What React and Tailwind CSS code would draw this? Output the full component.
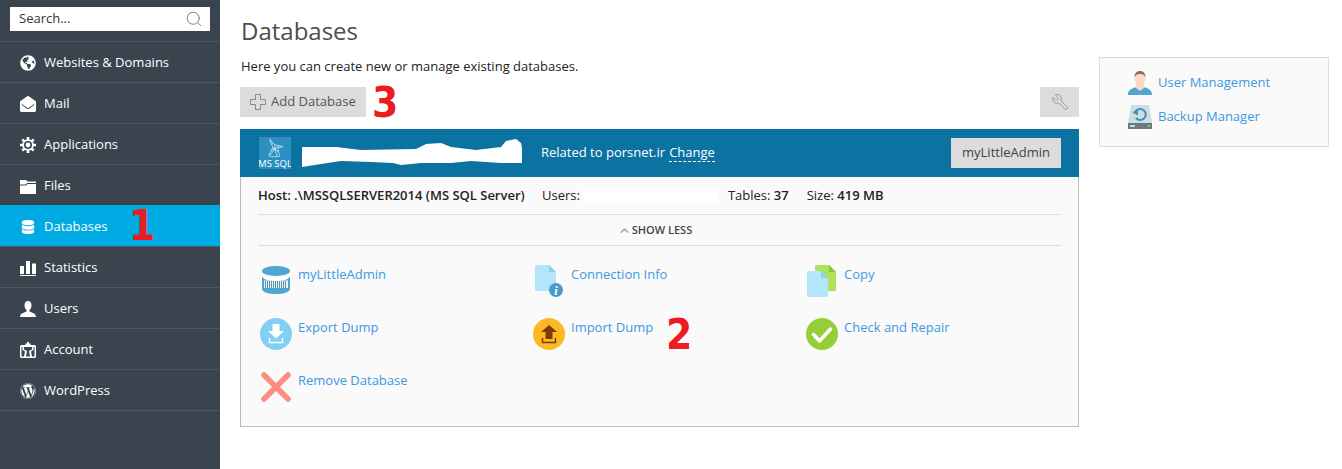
import { FaGlobeAmericas, FaEnvelopeOpen, FaDatabase, FaWordpress } from "react-icons/fa";
import { Search, Wrench, ChevronUp } from "lucide-react";

function GearIcon() {
  return (
    <svg width="16" height="16" viewBox="0 0 16 16">
      <path d="M8 0v16M0 8h16M2.300 2.300l11.400 11.400M13.700 2.300L2.300 13.700" stroke="currentColor" strokeWidth="2.600" />
      <circle cx="8" cy="8" r="5.800" fill="currentColor" />
      <circle cx="8" cy="8" r="4" fill="#39444f" />
      <circle cx="8" cy="8" r="2.400" fill="currentColor" />
    </svg>
  );
}

function FolderIcon() {
  return (
    <svg width="16" height="16" viewBox="0 0 16 16" fill="currentColor">
      <path d="M0 2h6l1.500 1.500H16V5H7L5.500 6.500H0z" />
      <path d="M0 7.500h6L7.500 6H16v10H0z" />
    </svg>
  );
}

function UserIcon() {
  return (
    <svg width="16" height="16" viewBox="0 0 16 16" fill="currentColor">
      <path d="M8 0c2.500 0 3.500 2 3.500 4.500 0 2-1 3.500-2 4.500v1.500c2 1 6.500 1.500 6.500 5.500H0c0-4 4.500-4.500 6.500-5.500V9c-1-1-2-2.500-2-4.500C4.500 2 5.500 0 8 0z" />
    </svg>
  );
}

function StatsIcon() {
  return (
    <svg width="16" height="16" viewBox="0 0 16 16" fill="currentColor">
      <rect x="0" y="6" width="4" height="8" />
      <rect x="6" y="1" width="4" height="13" />
      <rect x="12" y="3.500" width="4" height="10.500" />
      <rect x="0" y="15" width="16" height="1" />
    </svg>
  );
}

function AccountIcon() {
  return (
    <svg width="16" height="16" viewBox="0 0 16 16" fill="currentColor">
      <path d="M1.500 3h4V1.500h1.500V0h2v1.500h1.500V3h4A1.500 1.500 0 0 1 16 4.500v10a1.500 1.500 0 0 1-1.500 1.500h-13A1.500 1.500 0 0 1 0 14.500v-10A1.500 1.500 0 0 1 1.500 3zM1.500 5v9.500h2.500L5 9.500 2.500 8V5zm13 0h-1v3L11 9.500l1 5h2.500zM4 5v2.500l3 1.500-1 5.500h4L9 9l3-1.500V5z" fillRule="evenodd" />
    </svg>
  );
}

function PlusOutline() {
  return (
    <svg width="16" height="16" viewBox="0 0 16 16" fill="none" stroke="#8a8a8a" strokeWidth="1">
      <path d="M5.500 0.500h5v5h5v5h-5v5h-5v-5h-5v-5h5z" />
    </svg>
  );
}

function DbIcon() {
  return (
    <svg width="32" height="32" viewBox="0 0 32 32">
      <ellipse cx="16" cy="6" rx="14" ry="5" fill="#4fa6d1" />
      <path d="M2 8c0 3 6.500 5 14 5s14-2 14-5v3c0 3-6.500 5-14 5S2 14 2 11z" fill="#fff" />
      <path d="M2 11c0 3 6.500 5 14 5s14-2 14-5v13c0 3-6.500 5-14 5S2 27 2 24z" fill="#4fa6d1" />
      <path d="M4 15.500h24v7.500H4z" fill="#e9f3f8" />
      <path d="M5.500 16v7M7.500 16v7M9.500 16v7M11.500 16v7M13.500 16v7M15.500 16v7M17.500 16v7M19.500 16v7M21.500 16v7M23.500 16v7M25.500 16v7" stroke="#5f93ad" strokeWidth="1" />
    </svg>
  );
}

function DocIcon({ x = 0, y = 0, body = "#b3e5fc", fold = "#8fd0ee" }) {
  return (
    <g transform={`translate(${x} ${y})`}>
      <path d="M1.500 0H14l7 7v17.500a1.500 1.500 0 0 1-1.500 1.500h-18A1.500 1.500 0 0 1 0 24.500v-23A1.500 1.500 0 0 1 1.500 0z" fill={body} />
      <path d="M14 0l7 7h-7z" fill={fold} />
    </g>
  );
}

function InfoIcon() {
  return (
    <svg width="32" height="32" viewBox="0 0 32 32">
      <DocIcon x={2} y={0} />
      <circle cx="23" cy="25" r="7" fill="#4a9cc7" />
      <text x="23" y="30" textAnchor="middle" fontSize="12" fontWeight="700" fontStyle="italic" fontFamily="Liberation Serif, serif" fill="#fff">i</text>
    </svg>
  );
}

function CopyIcon() {
  return (
    <svg width="32" height="32" viewBox="0 0 32 32">
      <DocIcon x={9} y={0} body="#aee25c" fold="#8cc63f" />
      <DocIcon x={1} y={6} />
    </svg>
  );
}

function ExportIcon() {
  return (
    <svg width="32" height="32" viewBox="0 0 32 32">
      <circle cx="16" cy="16" r="16" fill="#81d0f4" />
      <path d="M12.500 6h7v7h4.500L16 20.500 8 13h4.500z" fill="#fff" />
      <path d="M9.500 20v4.500h13V20" fill="none" stroke="#fff" strokeWidth="1.500" />
    </svg>
  );
}

function ImportIcon() {
  return (
    <svg width="32" height="32" viewBox="0 0 32 32">
      <circle cx="16" cy="16" r="16" fill="#fdb924" />
      <path d="M16 7l8 7h-4.500v7h-7v-7H8z" fill="#7a3a0c" />
      <path d="M9.500 20v4.500h13V20" fill="none" stroke="#7a3a0c" strokeWidth="1.500" />
    </svg>
  );
}

function CheckIcon() {
  return (
    <svg width="32" height="32" viewBox="0 0 32 32">
      <circle cx="16" cy="16" r="16" fill="#94cf38" />
      <path d="M7.500 16.500l6 6.500 11-12" fill="none" stroke="#fff" strokeWidth="3.500" strokeLinecap="round" strokeLinejoin="round" />
    </svg>
  );
}

function RemoveIcon() {
  return (
    <svg width="32" height="32" viewBox="0 0 32 32">
      <path d="M4 4l24 24M28 4L4 28" stroke="#ff8a80" strokeWidth="5.500" strokeLinecap="round" />
    </svg>
  );
}

function MsSqlLogo() {
  return (
    <div className="w-8 h-8 bg-[#2b8fc0] flex flex-col items-center justify-end overflow-hidden">
      <svg width="20" height="20" viewBox="0 0 20 20" fill="none" stroke="#d5eaf5" strokeWidth="0.800">
        <path d="M5 1c1 3 4 5 5 6 3 0 6 1 8 2-2 0-4 0-5 1 0 3 1 6 2 8-3 1-8 1-11 0 0-3 3-6 4-9C7 7 5 4 5 1z" />
        <path d="M8 10l6 4M6 13l8-5M5 17l7-8M9 8l3 10M7 4l3 3" />
      </svg>
      <span className="text-[9.5px] leading-[11px] whitespace-nowrap text-white">MS SQL</span>
    </div>
  );
}

function UserManIcon() {
  return (
    <svg width="24" height="24" viewBox="0 0 24 24">
      <path d="M0 24c0-5 3-6 7-7.500h10c4 1.500 7 2.500 7 7.500z" fill="#4fa6d1" />
      <path d="M8 12h8v5l-4 3-4-3z" fill="#fbd9c4" />
      <ellipse cx="12" cy="7" rx="5.500" ry="7" fill="#fbd9c4" />
      <path d="M6.500 6C6.500 2 9 0 12 0s5.500 2 5.500 6C16 3.500 14 3 12 3S8 3.500 6.500 6z" fill="#8d6e5a" />
    </svg>
  );
}

function BackupIcon() {
  return (
    <svg width="24" height="24" viewBox="0 0 24 24">
      <path d="M3 0h18l3 18H0z" fill="#cfdde3" />
      <rect x="0" y="18" width="24" height="6" fill="#6b7a80" />
      <rect x="2" y="20" width="5" height="2" fill="#cfd8dc" />
      <rect x="20" y="20" width="2" height="2" fill="#9ccc3c" />
      <path d="M8 6a5.500 5.500 0 1 1 0 7" fill="none" stroke="#3d93bf" strokeWidth="2" />
      <path d="M4.500 7.500L10 3.500v7z" fill="#3d93bf" />
    </svg>
  );
}

const navItems = [
  { label: "Websites & Domains", icon: <FaGlobeAmericas size={16} /> },
  { label: "Mail", icon: <FaEnvelopeOpen size={16} /> },
  { label: "Applications", icon: <GearIcon /> },
  { label: "Files", icon: <FolderIcon /> },
  { label: "Databases", icon: <FaDatabase size={14} />, active: true, mark: "1" },
  { label: "Statistics", icon: <StatsIcon /> },
  { label: "Users", icon: <UserIcon /> },
  { label: "Account", icon: <AccountIcon /> },
  { label: "WordPress", icon: <FaWordpress size={16} /> },
];

const tools = [
  { label: "myLittleAdmin", icon: <DbIcon /> },
  { label: "Connection Info", icon: <InfoIcon /> },
  { label: "Copy", icon: <CopyIcon /> },
  { label: "Export Dump", icon: <ExportIcon /> },
  { label: "Import Dump", icon: <ImportIcon />, mark: "2" },
  { label: "Check and Repair", icon: <CheckIcon /> },
  { label: "Remove Database", icon: <RemoveIcon /> },
];

function Mark({ children, className }) {
  return (
    <span className={`font-['DejaVu_Sans',sans-serif] font-bold text-[42px] leading-none [font-stretch:condensed] text-[#ed1c24] ${className}`}>
      {children}
    </span>
  );
}

export default function App() {
  return (
    <div className="flex h-[469px] overflow-hidden bg-white font-['Open_Sans',sans-serif] text-[13px] text-[#222]">
      {/* Sidebar */}
      <aside className="w-[220px] shrink-0 bg-[#39444f] text-white">
        <div className="h-[41px] px-[10px] pt-[7px]">
          <div className="h-6 bg-white flex items-center justify-between pl-[9px] pr-[7px] text-[#333]">
            <span>Search...</span>
            <Search size={18} strokeWidth={1.250} className="text-[#777]" />
          </div>
        </div>
        {navItems.map((item) => (
          <div
            key={item.label}
            className={`relative h-[41px] flex items-center pl-5 pt-[2px] gap-2 border-t ${
              item.active ? "bg-[#00aae2] border-[#00aae2]" : "border-[#4b5764]"
            }`}
          >
            <span className="w-4 flex justify-center">{item.icon}</span>
            <span>{item.label}</span>
            {item.mark && <Mark className="absolute left-[129px] top-[-1px]">{item.mark}</Mark>}
          </div>
        ))}
        <div className="border-t border-[#4b5764]" />
      </aside>

      {/* Main column */}
      <main className="w-[859px] shrink-0 pl-5">
        <h1 className="pt-[15px] pl-px text-[24px] leading-[32px] text-[#4d4d4d]">Databases</h1>
        <p className="mt-[10px] pl-px leading-[18px]">Here you can create new or manage existing databases.</p>
        <div className="mt-[12px] h-[30px] flex items-center">
          <button className="h-[30px] w-[126px] bg-[#dcdcdc] flex items-center pl-[10px] gap-[5px] text-[#555]">
            <PlusOutline />
            <span>Add Database</span>
          </button>
          <Mark className="ml-[6px] mt-[2px]">3</Mark>
          <button className="ml-auto h-[30px] w-[39px] bg-[#dcdcdc] flex items-center justify-center text-[#999]">
            <Wrench size={18} strokeWidth={1.250} className="scale-x-[-1]" />
          </button>
        </div>

        {/* Database card */}
        <section className="mt-3 border-x border-b border-[#bdbdbd] bg-[#fafafa] h-[298px]">
          <header className="-mx-px h-12 bg-[#0b72a1] flex items-center pl-[19px] pr-[18px] text-white">
            <MsSqlLogo />
            <svg width="222" height="30" viewBox="0 0 222 30" className="ml-[10px]" fill="#fff">
              <path d="M1 9L35 9L60 12L115 11L125 6L140 5L150 9L175 12L200 9L205 3L215 1L220 5L221 10V25L200 25L170 23L150 25L120 25L100 27L92 25L70 24L40 23L20 26L1 29Z" />
            </svg>
            <span className="ml-[18px]">Related to porsnet.ir</span>
            <span className="ml-[4px] border-b border-dashed border-white leading-[17px]">Change</span>
            <button className="ml-auto h-[30px] w-[110px] bg-[#dcdcdc] text-[#444]">myLittleAdmin</button>
          </header>

          <div className="mx-[17px]">
            <div className="h-[38px] flex items-center border-b border-[#dcdcdc]">
              <span className="w-[284px] font-semibold">Host: .\MSSQLSERVER2014 (MS SQL Server)</span>
              <span>Users:</span>
              <span className="ml-[3px] w-[134px] h-[14px] bg-white" />
              <span className="ml-[11px]">Tables: <span className="font-semibold">37</span></span>
              <span className="ml-[18px]">Size: <span className="font-semibold">419 MB</span></span>
            </div>
            <div className="h-[31px] flex items-center justify-center border-b border-[#dcdcdc] text-[11px] font-semibold text-[#444] pr-[9px]">
              <ChevronUp size={13} strokeWidth={3} className="text-[#a5b4bf] mr-[1px]" />
              SHOW LESS
            </div>

            <div className="mt-[19px] grid grid-cols-[273px_273px_1fr] auto-rows-[53px]">
              {tools.map((t) => (
                <div key={t.label} className="relative flex items-start">
                  <span className="w-10 shrink-0 pl-[2px]">{t.icon}</span>
                  <a className="text-[#3b98e2] leading-[18px]">{t.label}</a>
                  {t.mark && <Mark className="absolute left-[135px] top-[-4px]">{t.mark}</Mark>}
                </div>
              ))}
            </div>
          </div>
        </section>
      </main>

      {/* Right column */}
      <div className="pl-5 pt-[57px]">
        <div className="w-[230px] h-[90px] border border-[#dcdcdc] bg-[#fafafa] pl-[28px] pt-[13px] flex flex-col gap-[10px]">
          <div className="flex items-center gap-[6px]">
            <UserManIcon />
            <a className="text-[#3b98e2]">User Management</a>
          </div>
          <div className="flex items-center gap-[6px]">
            <BackupIcon />
            <a className="text-[#3b98e2]">Backup Manager</a>
          </div>
        </div>
      </div>
    </div>
  );
}
